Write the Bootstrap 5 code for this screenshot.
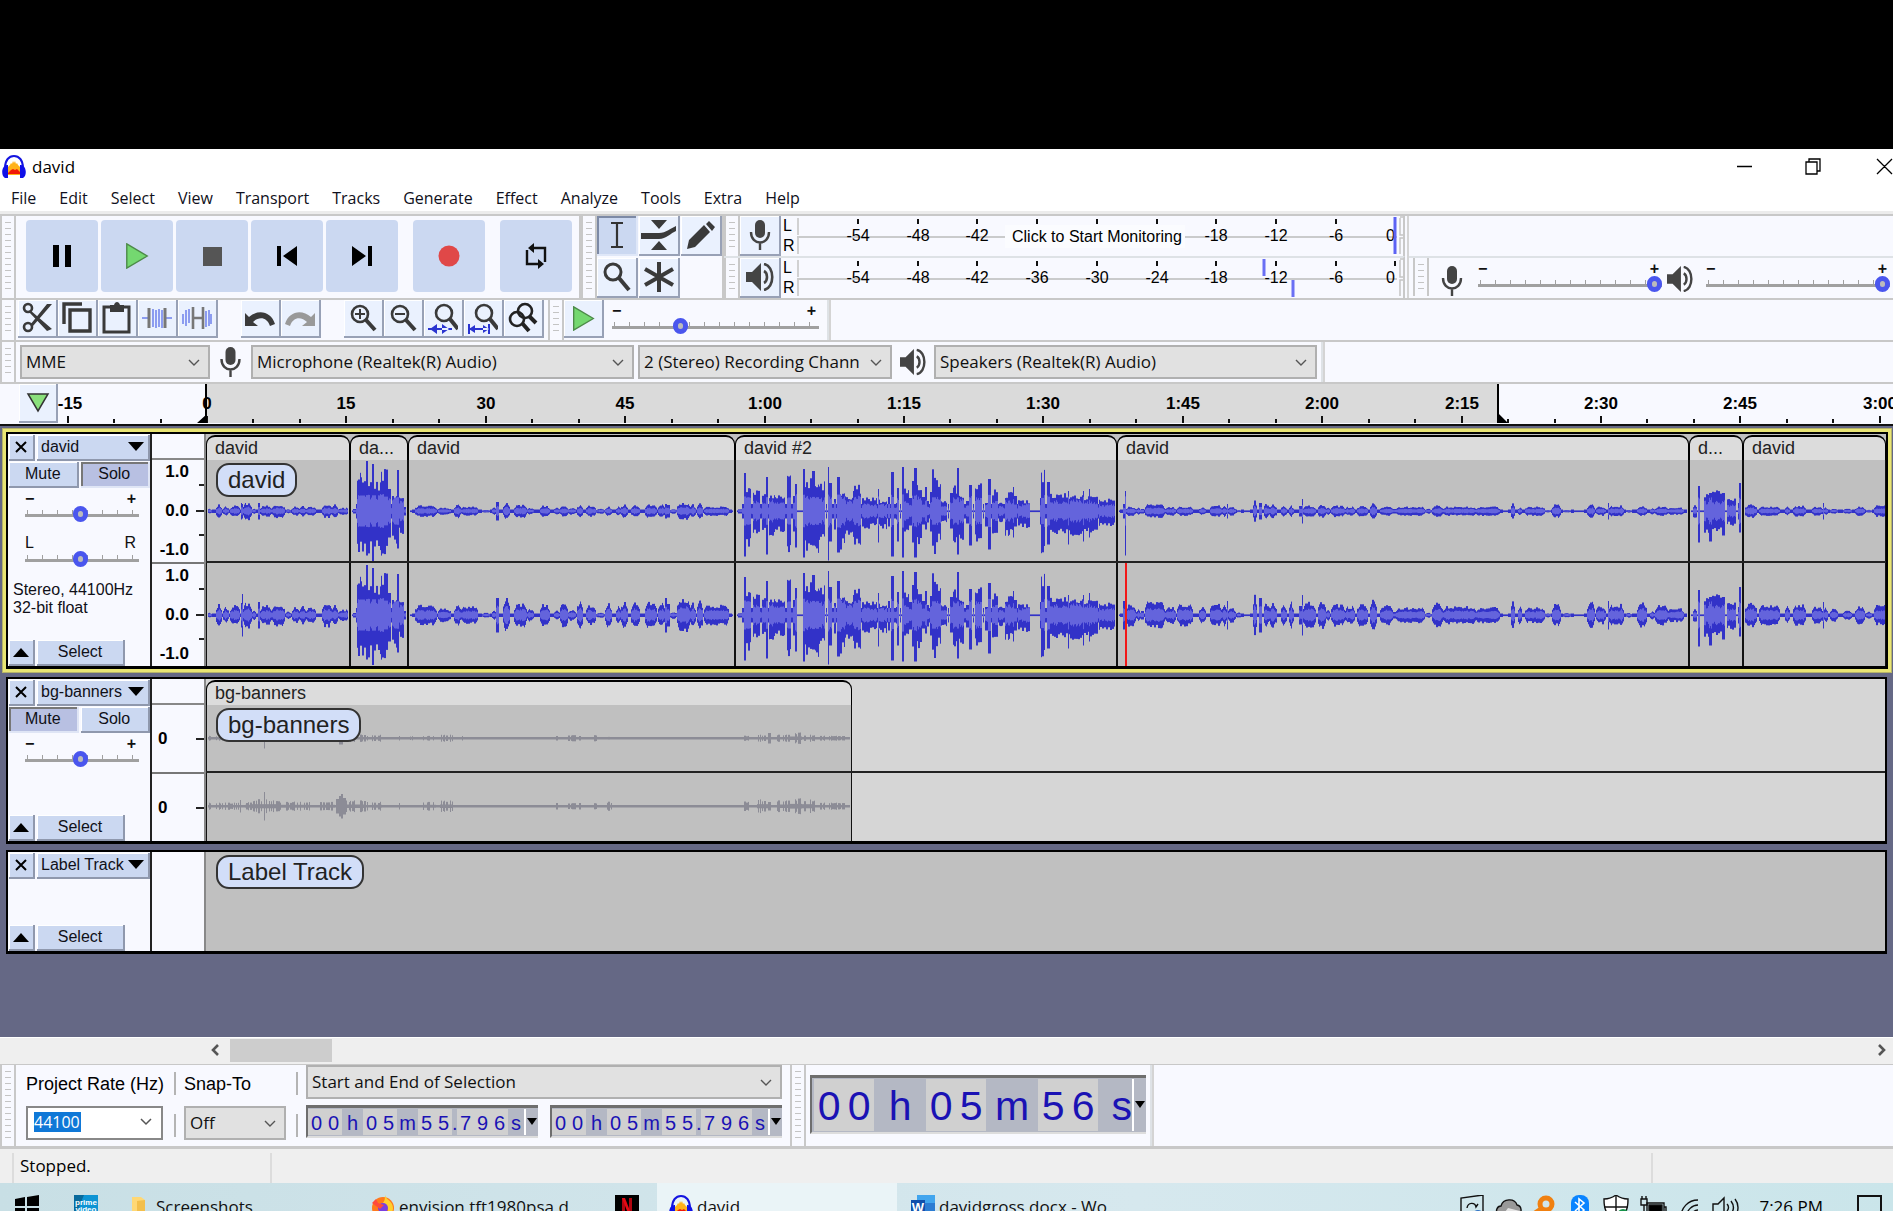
<!DOCTYPE html>
<html lang="en">
<head>
<meta charset="utf-8">
<title>david</title>
<meta name="viewport" content="width=device-width, initial-scale=1">
<link href="https://cdn.jsdelivr.net/npm/bootstrap@5.3.0/dist/css/bootstrap.min.css" rel="stylesheet">
<style>
:root{--ui:"Open Sans","Noto Sans",sans-serif;--ar:"Liberation Sans",Arial,sans-serif;--face:#f8f9ff;--line:#c8c8c8;--btn:#cbd8f1}
body{height:100vh;overflow:hidden;font-family:var(--ui);font-size:16px;line-height:20px;color:#000;background:#fff}
button{padding:0;border:0;color:inherit;font-size:inherit;line-height:inherit}
svg{display:block;flex:none}
.letterbox{height:149px;background:#000}
.titlebar{height:35px;font-size:17px;padding-left:2px;gap:6px}
.menubar{height:30px;border-bottom:3px solid #ececec;padding-left:11px;gap:23px}
.menubar a{color:#101020;text-decoration:none}
.dock{background:var(--face);border-top:2px solid var(--line)}
.dock.slim{height:42px}
.bar{border-right:2px solid var(--line)}
.tail{width:4px;border-right:2px solid #d4d4d4}
.grip{width:16px;border:solid var(--line);border-width:0 2px 0 2px;flex:none;padding:6px 3px}
.grip i{display:block;height:100%;background:repeating-linear-gradient(#c4c4c4 0 1px,transparent 1px 6px)}
.transport{gap:3px;padding:0 7px 2px 10px}
.big{width:72px;height:72px;border-radius:4px;background:var(--btn)}
.big.apart{margin-left:12px}
.toolgap{gap:1px}.rowgap{gap:2px}
.tool{width:41px;height:40px;background:#eaf1fe;border:solid #98a1b6;border-width:0 2px 2px 0;box-shadow:inset 1px 1px #fff;color:#333}
.tool.on{background:var(--btn);border-color:#dfe7f8;box-shadow:inset 2px 2px #7d8aa6}
.tool.edit{width:40px;height:38px}
.edits{padding-left:2px}
.gapper{width:23px}
.meter{width:606px}
svg text{font-family:var(--ar)}
.lr{width:16px;padding-left:2px;font:16px/20px var(--ar)}
.sel{height:34px;border:2px solid #b0b0b0;border-radius:0;background-color:#e1e1e1;color:#101010;font-size:17px;line-height:20px;padding:0 26px 0 4px;background-size:12px 7px;background-position:right 8px center;background-image:url("data:image/svg+xml,%3Csvg xmlns='http://www.w3.org/2000/svg' viewBox='0 0 12 7'%3E%3Cpath d='M1 1l5 5 5-5' fill='none' stroke='%23555' stroke-width='1.4'/%3E%3C/svg%3E")}
.sel.w190{width:190px}.sel.w383{width:383px}.sel.w254{width:254px}.sel.w102{width:102px}.sel.w476{width:476px}
.sl{font:bold 16px/14px var(--ar);color:#111}
.sl>span{padding:0 3px 0 0}
.sl.pan{font-weight:400;line-height:16px;margin-top:13px}
input[type=range]{appearance:none;-webkit-appearance:none;display:block;width:100%;height:16px;margin:0;background:linear-gradient(#a0a0a0,#a0a0a0) 0 8px/100% 3px no-repeat,repeating-linear-gradient(to right,transparent 0 2px,#a0a0a0 2px 3px,transparent 3px 15px) 0 4px/100% 4px no-repeat}
input[type=range]::-webkit-slider-thumb{-webkit-appearance:none;width:15px;height:16px;border-radius:8px;background:#bbb;border:5px solid #4a56ee}
.w207{width:207px}.w184{width:184px}.w114{width:114px}
.mixmic{margin:8px 15px 0 12px}
.mixtop{height:40px}
.timeline{height:42px;background:var(--face);border-top:2px solid var(--line)}
.pinbtn{width:39px;height:39px;margin-left:19px}
.timeline svg#ruler{width:0}
.project{background:#656885;border-top:2px solid #111;padding:2px 1px 0 2px;min-height:0}
.trk{margin:0 5px 6px 4px;border:solid #000;border-width:2px 2px 3px 2px;background:var(--face)}
.trk.focus{margin:0 0 1px;border:0;padding:4px;background:#e9e574;box-shadow:inset 0 0 0 1px #b5b36a}
.trk.focus>.d-flex{border:solid #000;border-width:2px 2px 3px 2px;background:var(--face)}
.h237{height:237px}.h167{height:167px}.h104{height:104px}
.tcp{width:144px;border-right:2px solid #222;flex:none;font:16px/18px var(--ar);color:#101018;padding:1px 0 0 1px}
.tcp>.d-flex{gap:2px}
.mrow{margin-top:1px}
.tb{height:26px;background:var(--btn);border:solid #8f98ad;border-width:0 2px 2px 0;box-shadow:inset 1px 1px #fff}
.tb.down{background:#b8c0e2;border-color:#dfe5f5;box-shadow:inset 2px 2px #777}
.sq{width:26px}.selbtn{width:88px}
.info{margin-top:14px}
.vscale{width:54px;flex:none;border-right:2px solid #888;font:bold 17px/24px var(--ar)}
.vscale .top{height:26px;border-bottom:2px solid #888}
.vscale .ch{padding-right:15px;text-align:right;background:repeating-linear-gradient(transparent 0 24px,#222 24px 26px,transparent 26px 50px) right 0/5px 100% no-repeat,linear-gradient(#222,#222) right 50%/8px 2px no-repeat}
.vscale .ch+.ch{border-top:2px solid #777}
.vscale .one{text-align:left;padding-left:6px;background:linear-gradient(#222,#222) right 50%/8px 2px no-repeat}
.lane{background:#c0c0c0;position:relative;overflow:hidden}
.lane.empty{background:#d6d6d6}
.clip{flex:none}
.cliphead{height:25px;margin-top:1px;border:solid #000;border-width:2px 1px 0;border-radius:9px 9px 0 0;background:#dcdcdc;font:18px/23px var(--ar);padding-left:8px;white-space:nowrap;overflow:hidden;color:#222}
.clipbody{border:solid #111;border-width:0 1px;background:#c0c0c0;overflow:hidden;min-height:0}
.chan{overflow:hidden;height:50%}
.divline{height:2px;background:#222;position:absolute;left:0;right:0}
.d1{top:127px}.d2{top:92px}
.pill{position:absolute;left:10px;top:29px;height:34px;border:2px solid #333;border-radius:13px;background:#d2def8;font:24px/30px var(--ar);padding:0 10px;color:#222}
.pill.p3{top:3px}
.cursor{position:absolute;width:2px;left:919px;top:129px;bottom:0;background:#f21818}
.hscroll{height:27px;background:#efefef;border-top:1px solid #fff;padding:0 6px 2px 208px}
.thumb{width:102px;background:#cdcdcd;height:23px;margin-left:8px}
.selbar{height:85px;border-top-width:1px;border-bottom:3px solid var(--line)}
.arl{font:18px/20px var(--ar);height:22px}
.rcol{gap:10px;padding-top:9px}
.first{padding-left:10px}
.vcol{gap:19px;padding-top:7px;margin:0 8px 0 10px}
.modecol{padding-bottom:8px}
.vsep{width:2px;height:23px;background:#b4b4b4}
.combo{width:137px;height:34px;border:2px solid #888;background:#fff;padding:0 8px 2px 6px}
.combo input{width:90px;border:0;outline:0;padding:0;font-size:16px;line-height:20px;background:linear-gradient(#0f78d7,#0f78d7) 0 0/47px 22px no-repeat;color:#fff}
.tc{width:232px;height:33px;padding:1px 0 1px 0;border:solid #6e6e6e;border-width:3px 0 2px 2px;border-bottom-color:#ddd;background:#b4b8c4;color:#1a12b4;font:20px/28px var(--ar)}
.tc span{text-align:center;width:17px}
.tc span.g{background:#d0d0d0}
.tc span.u{width:21px}.tc span.dot{width:5px}.tc span.last{width:16px}
.tc button{background:#b4b8c4;border-left:2px solid #fff;width:14px;flex:none;margin-left:auto}
.tc.lg{width:336px;height:59px;font-size:41px;line-height:54px;padding:1px 0 1px 2px;margin:10px 4px 0 4px}
.tc.lg span{width:30px}.tc.lg span.u{width:52px}.tc.lg span.last{width:34px;text-align:right}
.status{height:34px;background:#efefef;font-size:17px}
.status div{border-right:2px solid #dcdcdc;height:31px}
.s1{width:14px}.s2{width:258px;padding:3px 6px}.s3{margin-right:240px}
.taskbar{height:28px;background:linear-gradient(90deg,#c8dfe5,#d6e8ee 60%,#cae5ea);overflow:hidden;font-size:17px;line-height:24px}
.taskbar a{color:#111;text-decoration:none;height:48px;display:flex;align-items:center;flex:none;gap:4px}
.t0{width:74px;padding-left:15px}.t1{width:58px}.t2{width:239px}.t3{width:244px}.t4{width:42px}.t5{width:240px;padding-left:12px;background:#eaf4f7}.t6{padding-left:14px}
.tray{height:48px}
.note{margin-left:34px}
</style>
</head>
<body class="d-flex flex-column">
<svg width="0" height="0" class="position-absolute">
<defs>
<symbol id="aud" viewBox="0 0 24 24"><path d="M3 13C3 5 7 1 12 1s9 4 9 12" fill="none" stroke="#1414e0" stroke-width="2"/><path d="M6 20v-8l2-2 1-2 1 1 1-3 1 2 1-2 1 3 1-1 1 2 2 2v8z" fill="#ffb21a"/><path d="M6 18l3-3 2-1 2 1 2-1 3 3v2H6z" fill="#f01808"/><path d="M5 10C-1 11-1 21 3 23h3V10zM19 10c6 1 6 11 2 13h-3V10z" fill="#1010e8"/></symbol>
<symbol id="mic" viewBox="0 0 22 30"><rect x="6" y="0" width="10" height="18" rx="5" fill="#444"/><path d="M2 12c0 14 18 14 18 0M11 23v7" fill="none" stroke="#444" stroke-width="2.400"/></symbol>
<symbol id="spk" viewBox="0 0 28 28"><path d="M0 9h6l9-9v28l-9-9H0z" fill="#444"/><path d="M18 8c4 2 4 10 0 12M18 1c11 2 11 24 0 26" fill="none" stroke="#444" stroke-width="2.600"/></symbol>
<symbol id="mag" viewBox="0 0 30 30"><circle cx="11" cy="10" r="8" fill="none" stroke="#3a3a3a" stroke-width="3"/><path d="M17 16l10 12" stroke="#3a3a3a" stroke-width="4"/></symbol>
<symbol id="play" viewBox="0 0 24 28"><path d="M1 1l22 13L1 27z" fill="#74d870" stroke="#4c8a48" stroke-width="1.500"/></symbol>
</defs>
</svg>

<div class="letterbox flex-shrink-0"></div>

<header class="titlebar d-flex align-items-center flex-shrink-0">
<svg width="24" height="24"><use href="#aud"/></svg><span>david</span>
<svg class="ms-auto" width="156" height="20" fill="none" stroke="#000" stroke-width="1.300"><path d="M0 9.500h15M69 5h11v12H69zM72 5V2h11v12h-3M140 2l15 15M155 2l-15 15"/></svg>
</header>
<nav class="menubar d-flex align-items-center flex-shrink-0" aria-label="Menu">
<a href="#">File</a><a href="#">Edit</a><a href="#">Select</a><a href="#">View</a><a href="#">Transport</a><a href="#">Tracks</a><a href="#">Generate</a><a href="#">Effect</a><a href="#">Analyze</a><a href="#">Tools</a><a href="#">Extra</a><a href="#">Help</a>
</nav>

<div class="dock d-flex flex-shrink-0">
 <div class="bar d-flex"><div class="grip"><i></i></div>
  <div class="transport d-flex align-items-center">
  <button class="big" aria-label="Pause"><svg class="m-auto" width="20" height="22"><path d="M1 0h6v22H1zM13 0h6v22h-6z"/></svg></button>
  <button class="big" aria-label="Play"><svg class="m-auto" width="24" height="26"><use href="#play"/></svg></button>
  <button class="big" aria-label="Stop"><svg class="m-auto" width="19" height="19"><path d="M0 0h19v19H0z" fill="#555"/></svg></button>
  <button class="big" aria-label="Skip to start"><svg class="m-auto" width="20" height="20"><path d="M0 0h4v20H0zM20 0v20L6 10z"/></svg></button>
  <button class="big" aria-label="Skip to end"><svg class="m-auto" width="20" height="20"><path d="M16 0h4v20h-4zM0 0v20l14-10z"/></svg></button>
  <button class="big apart" aria-label="Record"><svg class="m-auto" width="22" height="22"><circle cx="11" cy="11" r="10.500" fill="#e04848"/></svg></button>
  <button class="big apart" aria-label="Loop"><svg class="m-auto" width="22" height="26" fill="none" stroke="#111" stroke-width="2.400"><path d="M2 7v14h12M20 19V5H8"/><path d="M9 0v10L3 5zM13 16v10l6-5z" fill="#111" stroke="none"/></svg></button>
  </div>
 </div>
 <div class="bar d-flex"><div class="grip"><i></i></div>
  <div class="d-flex flex-column rowgap">
   <div class="d-flex toolgap">
    <button class="tool on" aria-label="Selection tool"><svg class="m-auto" width="14" height="26" fill="none" stroke="#333" stroke-width="2.200"><path d="M1 1h12M7 1v24M1 25h12"/></svg></button>
    <button class="tool" aria-label="Envelope tool"><svg class="m-auto" width="36" height="30" fill="#3a3a3a"><path d="M10 0h16l-8 9zM10 30h16l-8-9zM0 13h18c7 0 12-5 17-7v5c-5 2-10 8-17 8H0z"/></svg></button>
    <button class="tool" aria-label="Draw tool"><svg class="m-auto" width="28" height="28" fill="#3a3a3a"><path d="M0 28l2-9L17 4l6 7L8 26zM19 3l3-3 6 6-3 4z"/></svg></button>
   </div>
   <div class="d-flex toolgap">
    <button class="tool" aria-label="Zoom tool"><svg class="m-auto" width="30" height="30"><use href="#mag"/></svg></button>
    <button class="tool" aria-label="Multi-tool"><svg class="m-auto" width="30" height="30" stroke="#3a3a3a" stroke-width="4"><path d="M15 0v30M1 7l28 16M1 23L29 7"/></svg></button>
   </div>
  </div>
 </div>
 <div>
  <div class="bar d-flex"><div class="grip"><i></i></div><button class="tool" aria-label="Recording meter"><svg class="m-auto" width="22" height="30"><use href="#mic"/></svg></button><div class="lr">L<br>R</div><svg class="meter" id="mrec" height="40"></svg></div>
  <div class="bar d-flex border-top border-2"><div class="grip"><i></i></div><button class="tool" aria-label="Playback meter"><svg class="m-auto" width="28" height="28"><use href="#spk"/></svg></button><div class="lr">L<br>R</div><svg class="meter" id="mplay" height="40"></svg></div>
 </div>
 <div class="tail"></div>
 <div class="flex-grow-1 d-flex flex-column">
  <div class="mixtop"></div>
  <div class="d-flex border-top border-2 align-items-stretch"><div class="grip ms-1"><i></i></div>
   <svg class="mixmic" width="22" height="30"><use href="#mic"/></svg>
   <label class="sl w184 d-block pt-1"><span class="d-flex justify-content-between"><b>−</b><b>+</b></span><input type="range" value="100" aria-label="Recording volume"></label>
   <svg class="ms-1 me-2 mt-2" width="28" height="26"><use href="#spk"/></svg>
   <label class="sl w184 d-block pt-1 ms-1"><span class="d-flex justify-content-between"><b>−</b><b>+</b></span><input type="range" value="100" aria-label="Playback volume"></label>
  </div>
 </div>
</div>

<div class="dock slim d-flex flex-shrink-0">
 <div class="grip"><i></i></div>
 <div class="d-flex edits" id="editbtns"></div>
 <div class="grip ms-1"><i></i></div>
 <button class="tool edit" aria-label="Play at speed"><svg class="m-auto" width="23" height="25"><use href="#play"/></svg></button>
 <label class="sl w207 ms-2 me-2 d-block pt-1"><span class="d-flex justify-content-between"><b>−</b><b>+</b></span><input type="range" value="32" aria-label="Playback speed"></label>
 <div class="tail border-start border-2"></div>
</div>

<div class="dock slim d-flex align-items-center flex-shrink-0">
 <div class="grip align-self-stretch"><i></i></div>
 <select class="form-select sel w190 ms-1" aria-label="Audio host"><option>MME</option></select>
 <svg class="mx-2" width="25" height="30"><use href="#mic"/></svg>
 <select class="form-select sel w383" aria-label="Recording device"><option>Microphone (Realtek(R) Audio)</option></select>
 <select class="form-select sel w254 ms-1" aria-label="Recording channels"><option>2 (Stereo) Recording Chann</option></select>
 <svg class="mx-2" width="26" height="28"><use href="#spk"/></svg>
 <select class="form-select sel w383" aria-label="Playback device"><option>Speakers (Realtek(R) Audio)</option></select>
 <div class="tail align-self-stretch border-start border-2 ms-1"></div>
</div>

<div class="timeline d-flex flex-shrink-0">
 <button class="tool pinbtn flex-shrink-0" aria-label="Pinned play head"><svg class="m-auto" width="24" height="20"><path d="M2 1h20L12 18z" fill="#8ae07c" stroke="#333" stroke-width="1.500"/></svg></button>
 <svg id="ruler" class="flex-grow-1" height="40"></svg>
</div>

<main class="project flex-grow-1 overflow-hidden">
 <section class="trk focus"><div class="d-flex h237">
  <div class="tcp d-flex flex-column">
   <div class="d-flex"><button class="tb sq" aria-label="Close track"><svg class="m-auto" width="12" height="12" stroke="#000" stroke-width="2"><path d="M1 1l10 10M11 1L1 11"/></svg></button><button class="tb flex-grow-1 d-flex align-items-center justify-content-between px-1">david<svg width="16" height="10"><path d="M0 0h16l-8 9z"/></svg></button></div>
   <div class="d-flex mrow"><button class="tb w-50">Mute</button><button class="tb down w-50">Solo</button></div>
   <label class="sl w114 mx-3 mt-1 d-block"><span class="d-flex justify-content-between"><b>−</b><b>+</b></span><input type="range" value="48" aria-label="Gain"></label>
   <label class="sl pan w114 mx-3 d-block"><span class="d-flex justify-content-between"><span>L</span><span>R</span></span><input type="range" value="48" aria-label="Pan"></label>
   <div class="ps-1 info">Stereo, 44100Hz<br>32-bit float</div>
   <div class="d-flex mt-auto"><button class="tb sq" aria-label="Collapse"><svg class="m-auto" width="16" height="9"><path d="M8 0l8 9H0z"/></svg></button><button class="tb selbtn">Select</button></div>
  </div>
  <div class="vscale d-flex flex-column"><div class="top"></div>
   <div class="ch flex-grow-1 d-flex flex-column justify-content-between"><span>1.0</span><span>0.0</span><span>-1.0</span></div>
   <div class="ch flex-grow-1 d-flex flex-column justify-content-between"><span>1.0</span><span>0.0</span><span>-1.0</span></div></div>
  <div class="lane flex-grow-1"><div class="d-flex h-100" id="lane1"></div><div class="divline d1"></div><div class="cursor"></div><span class="pill">david</span></div>
 </div></section>

 <section class="trk d-flex h167 mt-1">
  <div class="tcp d-flex flex-column">
   <div class="d-flex"><button class="tb sq" aria-label="Close track"><svg class="m-auto" width="12" height="12" stroke="#000" stroke-width="2"><path d="M1 1l10 10M11 1L1 11"/></svg></button><button class="tb flex-grow-1 d-flex align-items-center justify-content-between px-1">bg-banners<svg width="16" height="10"><path d="M0 0h16l-8 9z"/></svg></button></div>
   <div class="d-flex mrow"><button class="tb down w-50">Mute</button><button class="tb w-50">Solo</button></div>
   <label class="sl w114 mx-3 mt-1 d-block"><span class="d-flex justify-content-between"><b>−</b><b>+</b></span><input type="range" value="48" aria-label="Gain"></label>
   <div class="d-flex mt-auto"><button class="tb sq" aria-label="Collapse"><svg class="m-auto" width="16" height="9"><path d="M8 0l8 9H0z"/></svg></button><button class="tb selbtn">Select</button></div>
  </div>
  <div class="vscale d-flex flex-column"><div class="top"></div>
   <div class="ch one flex-grow-1 d-flex flex-column justify-content-center"><span>0</span></div>
   <div class="ch one flex-grow-1 d-flex flex-column justify-content-center"><span>0</span></div></div>
  <div class="lane empty flex-grow-1"><div class="d-flex h-100" id="lane2"></div><div class="divline d2"></div><span class="pill">bg-banners</span></div>
 </section>

 <section class="trk d-flex h104">
  <div class="tcp d-flex flex-column">
   <div class="d-flex"><button class="tb sq" aria-label="Close track"><svg class="m-auto" width="12" height="12" stroke="#000" stroke-width="2"><path d="M1 1l10 10M11 1L1 11"/></svg></button><button class="tb flex-grow-1 d-flex align-items-center justify-content-between px-1">Label Track<svg width="16" height="10"><path d="M0 0h16l-8 9z"/></svg></button></div>
   <div class="d-flex mt-auto"><button class="tb sq" aria-label="Collapse"><svg class="m-auto" width="16" height="9"><path d="M8 0l8 9H0z"/></svg></button><button class="tb selbtn">Select</button></div>
  </div>
  <div class="vscale"></div>
  <div class="lane flex-grow-1"><span class="pill p3">Label Track</span></div>
 </section>
</main>

<div class="hscroll d-flex align-items-center flex-shrink-0">
 <svg width="14" height="12" fill="none" stroke="#555" stroke-width="2.600"><path d="M10 1L5 6l5 5"/></svg><div class="thumb"></div>
 <svg class="ms-auto" width="10" height="12" fill="none" stroke="#555" stroke-width="2.600"><path d="M2 1l5 5-5 5"/></svg>
</div>

<div class="dock selbar d-flex flex-shrink-0">
 <div class="grip"><i></i></div>
 <div class="rcol first d-flex flex-column">
  <label class="arl" for="rate">Project Rate (Hz)</label>
  <div class="combo d-flex align-items-center"><input id="rate" value="44100"><svg class="ms-auto" width="13" height="8" fill="none" stroke="#555" stroke-width="1.500"><path d="M1 1l5 5 5-5"/></svg></div>
 </div>
 <div class="vcol d-flex flex-column"><div class="vsep"></div><div class="vsep"></div></div>
 <div class="rcol d-flex flex-column">
  <label class="arl" for="snap">Snap-To</label>
  <select class="form-select sel w102" id="snap"><option>Off</option></select>
 </div>
 <div class="vcol d-flex flex-column"><div class="vsep"></div><div class="vsep"></div></div>
 <div class="modecol d-flex flex-column justify-content-between">
  <select class="form-select sel w476" aria-label="Selection mode"><option>Start and End of Selection</option></select>
  <div class="d-flex justify-content-between"><div class="tc d-flex" data-time="00h05m55.796s"></div><div class="tc d-flex" data-time="00h05m55.796s"></div></div>
 </div>
 <div class="grip ms-2"><i></i></div>
 <div class="tc lg d-flex" data-time="00h05m56s"></div>
 <div class="tail border-start border-2"></div>
</div>

<div class="status d-flex flex-shrink-0 pt-1"><div class="s1"></div><div class="s2">Stopped.</div><div class="flex-grow-1 s3"></div></div>

<footer class="taskbar d-flex flex-shrink-0">
 <a class="t0" href="#" aria-label="Start"><svg width="24" height="24"><path d="M0 4l10-2v9H0zM12 2l12-2v11H12zM0 13h10v9L0 20zM12 13h12v11l-12-2z"/></svg></a>
 <a class="t1" href="#" aria-label="Prime Video"><svg width="24" height="24"><rect width="24" height="24" fill="#0d94d4"/><path d="M0 0h10L0 24z" fill="#086a9c"/><text x="12" y="10" fill="#fff" font-size="8" font-weight="bold" text-anchor="middle">prime</text><text x="12" y="17" fill="#fff" font-size="8" font-weight="bold" text-anchor="middle">video</text></svg></a>
 <a class="t2" href="#"><svg width="20" height="20"><path d="M0 0h9l4 3v17H0z" fill="#ffd875"/><path d="M5 4l8-1v17H5z" fill="#f3bf4c"/></svg>Screenshots</a>
 <a class="t3" href="#"><svg width="24" height="24"><circle cx="12" cy="13" r="11" fill="#ff7a1c"/><path d="M14 0c1 5 8 6 8 13a10 10 0 01-6 9c3-6 0-12-6-13 4-1 4-6 4-9z" fill="#ffcf2e"/><circle cx="12" cy="13" r="5" fill="#7a3fe0"/><path d="M1 8l4-4 2 4 6 2-4 4z" fill="#ff4a3c"/></svg>envision.tft1980psa.d</a>
 <a class="t4" href="#" aria-label="Netflix"><svg width="24" height="24"><rect width="24" height="24"/><path d="M7 3v18h3V3zM14 3v18h3V3z" fill="#b00610"/><path d="M7 3h3l7 18h-3z" fill="#e50914"/></svg></a>
 <a class="t5" href="#"><svg width="24" height="24"><use href="#aud"/></svg>david</a>
 <a class="t6" href="#"><svg width="24" height="24"><rect x="6" width="18" height="24" fill="#41a5ee"/><path d="M6 8h18v8H6z" fill="#2b7cd3"/><path d="M6 16h18v8H6z" fill="#185abd"/><rect y="5" width="14" height="14" fill="#1050ac"/><text x="7" y="17" font-size="13" font-weight="bold" fill="#fff" text-anchor="middle">W</text></svg>davidgross.docx - Wo</a>
 <div class="tray d-flex align-items-center ms-auto pe-2">
  <svg width="299" height="24" fill="none" stroke="#111" stroke-width="1.400">
   <path d="M1 24V3l22-3v24M7 13c1-6 8-6 9-1l2-3M7 17v6M7 17h5"/><circle cx="18" cy="21" r="6" fill="#2e72c4" stroke="none"/>
   <path d="M38 20c-3-4-1-9 3-9 2-8 14-8 16-1 5 1 5 7 2 10z" fill="#999"/><path d="M42 21l6-8 12 3v6z" fill="#e4e4e4" stroke="none"/>
   <g stroke="#f08010" stroke-width="5"><circle cx="86" cy="9" r="6"/><path d="M81 14l-6 4"/></g>
   <rect x="111" width="18" height="28" rx="8" fill="#0a84ff" stroke="none"/><path d="M115 7l9 8-5 5V4l5 4-9 8" stroke="#fff" stroke-width="1.600"/>
   <path d="M144 4c5 0 8-1 12-4 4 3 7 4 12 4 0 9-1 15-12 22-11-7-12-13-12-22z" fill="#fff"/><path d="M156 0v24M144 12h24"/><circle cx="163" cy="20" r="6" fill="#17934a" stroke="none"/>
   <path d="M187 8h17v12h-17zM204 12h2v5"/><path d="M189 10h13v9h-13z" fill="#000"/><path d="M181 4h6v6h-6zM182 4V1M186 4V1M184 10v8"/>
   <path d="M221 22c0-9 7-17 17-17M226 22c1-7 6-12 12-12M231 22c1-4 3-7 7-7"/>
   <path d="M253 9h5l6-6v19l-6-5h-5zM267 9c2 2 2 5 0 7M271 6c3 4 3 9 0 13M275 4c4 5 4 12 0 17"/></svg>
  <span>7:26 PM</span>
  <svg class="note" width="28" height="24" fill="none" stroke="#111" stroke-width="2"><path d="M1 1h23v24H1z"/></svg>
 </div>
</footer>

<script>
const K='#3a3a3a', B='#2a34d0';
/* edit toolbar */
const edit=[
['Cut',`<g fill="none" stroke="${K}" stroke-width="2.600"><circle cx="6" cy="6" r="4"/><circle cx="6" cy="25" r="4"/></g><path d="M8 8l22 19-5 2L7 10zM8 23L25 2h5L11 24z" fill="${K}"/>`],
['Copy',`<path d="M2 22V2h18M8 8h20v21H8z" fill="none" stroke="${K}" stroke-width="3.400"/>`],
['Paste',`<path d="M2 5h25v25H2z" fill="none" stroke="${K}" stroke-width="3"/><path d="M8 3h4c1-4 5-4 6 0h4v7H8z" fill="${K}"/>`],
['Trim',`<path d="M0 16h7M23 16h7M11 7v18M14 8v18M17 7v18M20 8v18" stroke="#8c9cf0" stroke-width="2"/><path d="M7 6v20M23 6v20" stroke="#777" stroke-width="3"/>`],
['Silence',`<path d="M1 12v10M4 8v16M7 7v14M24 9v16M27 8v16M29 12v10" stroke="#8c9cf0" stroke-width="2"/><path d="M11 5v22M21 5v22M11 16h10" stroke="#777" stroke-width="2.600"/>`],
0,
['Undo',`<path d="M0 11v13h13l-5-4c6-6 14-5 17 4l5-2C26 9 13 7 4 15z" fill="${K}"/>`],
['Redo',`<path d="M30 11v13H17l5-4c-6-6-14-5-17 4l-5-2C4 9 17 7 26 15z" fill="#999"/>`],
0,
['Zoom in',`<g fill="none" stroke="${K}" stroke-width="2.600"><circle cx="12" cy="12" r="8"/><path d="M7 12h10M12 7v10" stroke-width="2"/><path d="M18 18l9 10" stroke-width="4"/></g>`],
['Zoom out',`<g fill="none" stroke="${K}" stroke-width="2.600"><circle cx="12" cy="12" r="8"/><path d="M7 12h10" stroke-width="2"/><path d="M18 18l9 10" stroke-width="4"/></g>`],
['Fit selection',`<g fill="none" stroke="${K}" stroke-width="2.600"><circle cx="16" cy="11" r="8"/><path d="M22 17l8 10" stroke-width="4"/></g><path d="M2 27l7-5v10zM21 27l-7-5v10zM0 26h24v2H0z" fill="${B}"/>`],
['Fit project',`<g fill="none" stroke="${K}" stroke-width="2.600"><circle cx="16" cy="11" r="8"/><path d="M22 17l8 10" stroke-width="4"/></g><path d="M0 22h2v10H0zM20 22h2v10h-2zM1 27l6-4v8zM21 27l-6-4v8zM2 26h18v2H2z" fill="${B}"/>`],
['Zoom toggle',`<g fill="none" stroke="#222" stroke-width="2.600"><circle cx="17" cy="9" r="7"/><circle cx="9" cy="17" r="7"/><path d="M21 14l7 7M14 21l7 8" stroke-width="4"/></g>`]];
document.getElementById('editbtns').innerHTML=edit.map(e=>e?`<button class="tool edit" aria-label="${e[0]}"><svg class="m-auto" width="30" height="32">${e[1]}</svg></button>`:'<span class="gapper"></span>').join('');

/* level meters */
function meter(id,rec){
 let s='<path d="M0 21h600" stroke="#bbb" stroke-width="1.500"/><path d="M1 2v17M1 22v16M603 2v17h3M603 38V22h3M603 1h3" stroke="#c4c4c4" stroke-width="1.500" fill="none"/>';
 for(let i=0;i<10;i++){const x=Math.round(61+i*59.7),v=-54+i*6;
  s+=`<path d="M${x} 3v5" stroke="#111" stroke-width="2"/>`;
  if(rec&&i>2&&i<6)continue;
  s+=`<text x="${x}" y="25" font-size="16" text-anchor="${i==9?'end':'middle'}">${v}</text>`;}
 s+=rec?'<rect x="208" y="9" width="180" height="23" fill="#fbfcff"/><text x="215" y="26" font-size="16">Click to Start Monitoring</text><path d="M598 1v37" stroke="#5c62f4" stroke-width="3"/>':'<path d="M467 1v17M496 22v17" stroke="#6a70f4" stroke-width="3"/>';
 document.getElementById(id).innerHTML=s;}
meter('mrec',1);meter('mplay',0);

/* time ruler: a label for each 15 s, a short tick for each 5 s */
(function(){const o=149,step=139.4;let s='<rect x="148" y="0" width="1292" height="39" fill="#dadada"/>';
 for(let i=-3;i<37;i++){const x=Math.round(o+i*step/3),m=i%3==0;
  s+=`<path d="M${x} ${m?32:35}V39" stroke="#111" stroke-width="2"/>`;
  if(m){const t=i*5,l=Math.abs(t)<60?t:Math.floor(t/60)+':'+String(t%60).padStart(2,'0');
   s+=`<text x="${Math.max(x,12)}" y="25" font-size="17" font-weight="bold" text-anchor="middle">${l}</text>`;}}
 s+='<path d="M148 0v39M1440 0v39" stroke="#000" stroke-width="2"/><path d="M139 39l10-9v9zM1440 29l10 10h-10z"/>';
 document.getElementById('ruler').innerHTML=s;})();

/* clips: quiet ones hold [from,to,amp ch1,amp ch2], loud ones [from,to,up,down] */
const clips=[
{n:'david',a:206,b:350,q:[[207,212,2,2],[216,222,6,10],[223,229,4,7],[230,240,5,9],[241,242,8,12],[242,243,7,21],[243,252,8,12],[252,256,3,6],[258,260,8,13],[260,272,5,9],[272,285,6,10],[286,291,2,4],[292,300,4,7],[300,306,5,9],[306,316,4,7],[322,332,6,11],[332,338,6,9],[338,349,3,5]]},
{n:'da...',a:350,b:408,l:[[353,356,2,2],[357,361,34,38],[361,366,30,38],[366,368,50,44],[368,372,28,38],[372,374,47,51],[374,381,27,35],[381,388,37,40],[388,391,22,26],[392,397,15,30],[397,399,41,37],[399,404,12,20],[404,407,4,4]]},
{n:'david',a:408,b:735,q:[[415,437,5,9],[438,451,3,6],[454,461,6,9],[461,478,4,8],[482,490,1,2],[492,496,4,5],[496,499,9,17],[503,510,7,15],[514,527,6,11],[527,534,3,6],[540,550,5,10],[554,560,3,4],[560,568,5,12],[568,576,3,5],[577,583,6,14],[586,596,5,9],[596,605,2,2],[605,612,4,11],[616,621,4,8],[621,628,6,12],[631,640,5,11],[645,657,6,12],[658,665,6,11],[665,667,7,17],[667,670,6,11],[670,677,2,3],[677,690,8,16],[690,696,6,11],[697,703,8,15],[704,729,4,9]]},
{n:'david #2',a:735,b:1117,l:[[738,742,2,2],[744,746,38,45],[746,751,22,32],[753,760,20,22],[762,766,20,18],[766,768,34,43],[769,775,16,22],[775,785,14,19],[787,791,32,42],[793,795,15,20],[795,797,27,36],[803,805,42,46],[805,812,30,35],[812,815,40,34],[815,819,28,38],[819,825,26,26],[828,829,44,49],[829,832,28,30],[834,836,12,18],[837,840,34,41],[840,845,18,34],[845,853,15,24],[853,861,23,30],[862,870,14,18],[870,877,12,13],[878,879,22,31],[879,887,10,16],[888,890,14,15],[891,894,39,45],[896,897,8,8],[897,899,23,30],[902,904,44,46],[904,909,20,23],[909,912,13,14],[912,914,30,31],[914,917,43,46],[917,922,24,30],[922,925,14,13],[925,927,24,18],[927,929,10,11],[930,932,19,20],[932,936,40,42],[936,941,28,28],[941,947,10,10],[950,953,18,17],[953,957,23,28],[957,959,43,43],[959,964,15,26],[966,969,10,12],[969,972,26,34],[975,982,25,27],[985,988,8,15],[988,991,32,38],[992,998,19,20],[999,1003,8,10],[1005,1009,17,23],[1009,1013,17,22],[1013,1014,24,26],[1014,1017,15,15],[1018,1030,10,15],[1040,1041,13,13],[1041,1045,37,42],[1047,1050,29,33],[1050,1060,16,23],[1060,1068,17,22],[1068,1069,20,33],[1069,1083,16,22],[1083,1084,20,30],[1084,1089,14,20],[1089,1090,22,26],[1090,1098,13,19],[1099,1115,11,14]]},
{n:'david',a:1117,b:1689,q:[[1123,1125,7,14],[1125,1126,44,15],[1126,1136,4,10],[1136,1141,3,5],[1141,1144,2,4],[1145,1165,6,12],[1165,1176,4,8],[1177,1193,4,10],[1199,1206,3,7],[1210,1222,5,10],[1222,1227,5,10],[1227,1228,7,14],[1228,1236,4,7],[1237,1241,1,3],[1253,1257,12,23],[1259,1262,8,17],[1264,1269,8,13],[1269,1277,6,11],[1281,1287,5,10],[1289,1294,5,12],[1299,1302,5,9],[1302,1303,12,20],[1303,1316,5,12],[1318,1326,6,13],[1326,1330,4,6],[1331,1345,5,10],[1345,1355,4,8],[1357,1368,5,11],[1370,1377,7,14],[1380,1393,4,9],[1393,1396,2,3],[1396,1425,4,7],[1425,1432,2,2],[1432,1443,5,11],[1443,1476,4,8],[1476,1500,4,7],[1511,1515,9,16],[1518,1522,4,10],[1525,1545,4,7],[1545,1551,1,2],[1552,1561,6,10],[1563,1571,1,2],[1587,1595,6,12],[1596,1606,4,8],[1608,1609,8,14],[1609,1624,5,10],[1626,1632,1,2],[1637,1647,4,11],[1650,1655,3,4],[1655,1668,4,9],[1668,1684,3,6]]},
{n:'d...',a:1689,b:1743,l:[[1693,1697,5,6],[1698,1700,25,31],[1704,1709,18,22],[1709,1712,18,30],[1712,1722,19,19],[1722,1725,18,24],[1727,1736,12,13],[1738,1739,8,8],[1739,1741,28,21]]},
{n:'david',a:1743,b:0,q:[[1745,1757,6,11],[1759,1780,4,9],[1785,1790,4,8],[1793,1806,5,10],[1812,1823,4,8],[1823,1824,8,13],[1824,1828,4,8],[1830,1838,2,6],[1843,1852,2,4],[1855,1865,4,8],[1866,1872,1,3],[1874,1890,5,9]]}];
const bg={n:'bg-banners',a:206,b:852,q:[[208,214,2,3],[216,240,2,3],[240,241,3,6],[245,252,2,4],[252,264,3,6],[264,265,10,14],[265,280,3,6],[280,310,2,4],[320,335,2,4],[336,339,3,7],[339,341,6,10],[341,343,6,12],[343,346,3,8],[346,366,3,5],[367,368,2,4],[372,382,3,4],[399,400,2,3],[410,414,2,1],[423,436,2,4],[440,453,3,5],[462,463,2,1],[556,558,2,3],[568,576,3,3],[579,581,2,3],[592,597,3,3],[607,612,1,4],[744,749,2,4],[757,768,3,6],[768,771,5,4],[777,790,3,5],[790,802,5,7],[802,815,3,6],[820,845,2,3]]};
const rnd=x=>{const v=Math.sin(x*127.1+11.7)*43758.5453;return v-Math.floor(v)};
function wave(c,ch,h,grey){
 const list=c.l||c.q,at=x=>list.find(e=>x>=e[0]&&x<e[1]);
 const mid=Math.round(h/2)+(ch&&!grey?1:0);let o='',r='';const end=c.b||1890;
 for(let x=c.a+2;x<end-2;x++){
  let u=grey?1:.6,d=u,tp=1,body=0;const k=at(x);
  if(k){const thin=k[1]-k[0]<4;body=1;
   if(!thin&&!grey&&!c.l)tp=Math.min(1,.6+.2*Math.min(x-k[0],k[1]-1-x));
   const f=thin?1:(.74+.4*rnd(x>>1))*tp,g=thin?1:(.78+.34*rnd((x>>1)+9))*tp;
   if(c.l){u=k[2]*f;d=k[3]*g}else{u=k[2+ch]*f;d=k[2+ch]*g;if(!ch&&k[2]==44)u=20}
   if(grey)u=d=Math.max(1,k[2+ch]*(thin||rnd(x)>.45?f:.3));}
  else if(c.l&&c.a!=1689&&at(x-2)&&at(x+2)){u=d=7;body=1}
  else if(!c.l&&!grey&&(at(x-3)||at(x+3)))u=d=1.5;
  const X=x-c.a-.5;
  o+=`M${X} ${(mid-u).toFixed(1)}V${(mid+d+.5).toFixed(1)}`;
  if(body&&!grey){const i=Math.min(Math.max(u,d)*(c.l?.45:.5)*(.8+.3*rnd(x)),13+rnd(x>>2)*4);r+=`M${X} ${(mid-i).toFixed(1)}V${(mid+i).toFixed(1)}`}}
 return `<svg width="${end-c.a}" height="${h}"><path d="${o}" stroke="${grey?'#8c8c96':'#3232c8'}"/><path d="${r}" stroke="#6464dc"/></svg>`;}
function clip(c,h,grey){
 return `<div class="clip d-flex flex-column${c.b?'':' flex-grow-1'}" style="width:${(c.b||1743)-c.a}px"><div class="cliphead flex-shrink-0">${c.n}</div><div class="clipbody flex-grow-1"><div class="chan">${wave(c,0,h,grey)}</div><div class="chan">${wave(c,1,h,grey)}</div></div></div>`;}
document.getElementById('lane1').innerHTML=clips.map(c=>clip(c,102,0)).join('');
document.getElementById('lane2').innerHTML=clip(bg,66,1);

/* time fields */
document.querySelectorAll('.tc').forEach(t=>{const s=t.dataset.time;
 t.innerHTML=[...s].map((c,i)=>`<span class="${/\d/.test(c)?'g':c=='.'?'dot':i==s.length-1?'last':'u'}">${c}</span>`).join('')+'<button aria-label="Format"><svg width="12" height="8"><path d="M1 0h10L6 7z"/></svg></button>';});
</script>
<script src="https://cdn.jsdelivr.net/npm/bootstrap@5.3.0/dist/js/bootstrap.bundle.min.js"></script>
</body>
</html>
